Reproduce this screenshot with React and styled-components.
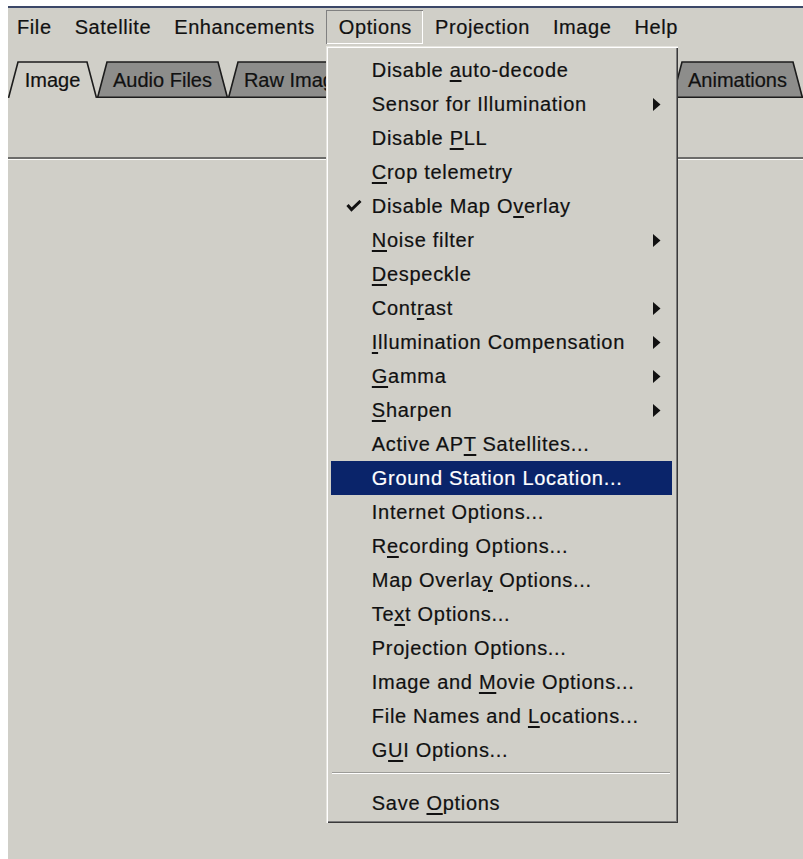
import React from "react";
import styled, { createGlobalStyle, css } from "styled-components";

const FACE = "#d0cfc8";
const INK = "#111";

const GlobalStyle = createGlobalStyle`
  html, body { background: #fff; }
  body {
    margin: 6px 0 0 8px;
    overflow: hidden;
    font-family: "Liberation Sans", Arial, sans-serif;
    color: ${INK};
    -webkit-text-stroke: 0.2px currentColor;
  }
`;

const Window = styled.div`
  min-height: calc(100vh - 6px);
  background: ${FACE};
  border-top: 2px solid #3c4868;
  display: flex;
  flex-direction: column;
`;

/* ---------- menu bar ---------- */

const MenuBar = styled.nav`
  height: 38px;
  display: flex;
  align-items: center;
  font-size: 20px;
  letter-spacing: 0.6px;
  position: relative;
  z-index: 5;
`;

const MenuSlot = styled.div`
  position: relative;
`;

const MenuTitle = styled.div`
  height: 34px;
  line-height: 34px;
  padding: 0 11px 0 12px;
  white-space: nowrap;
  ${(p) => p.$first && css`padding-left: 9px;`}
  ${(p) =>
    p.$open &&
    css`
      padding: 0 11px 0 13px;
      box-shadow: inset 1px 1px 0 #808080, inset -1px -1px 0 #fff;
    `}
`;

/* ---------- dropdown ---------- */

const Dropdown = styled.div`
  position: absolute;
  top: 36px;
  left: 0;
  width: 352px;
  box-sizing: border-box;
  padding: 7px 6px 3px 5px;
  background: ${FACE};
  box-shadow: inset 1px 1px 0 #e6e5df, inset 2px 2px 0 #fff,
    inset -1px -1px 0 #3a3a3a, inset -2px -2px 0 #7c7c7c;
  letter-spacing: 0.7px;
`;

const Item = styled.div`
  height: 34px;
  display: grid;
  grid-template-columns: 41px 1fr 24px;
  align-items: center;
  white-space: nowrap;
  ${(p) =>
    p.$hot &&
    css`
      background: #0a246a;
      color: #fff;
    `}
`;

const CheckCell = styled.span`
  justify-self: start;
  margin-left: 15px;
  display: flex;
`;

const ArrowCell = styled.span`
  justify-self: start;
  margin-left: 5px;
  display: flex;
`;

const Label = styled.span`
  line-height: 34px;
`;

const Key = styled.u`
  text-decoration-thickness: 1.5px;
  text-underline-offset: 3px;
`;

const Separator = styled.div`
  height: 0;
  margin: 5px 2px 12px 1px;
  border-top: 1px solid #9c9c98;
  border-bottom: 1px solid #fff;
`;

const Check = () => (
  <svg width="16" height="12" viewBox="0 0 16 12">
    <polyline points="1.5,5 5.5,9.5 14.5,1" fill="none" stroke={INK} strokeWidth="3" />
  </svg>
);

const Arrow = () => (
  <svg width="8" height="13" viewBox="0 0 8 13">
    <polygon points="0,0 7.5,6.5 0,13" fill={INK} />
  </svg>
);

/* ---------- tabs ---------- */

const TabStrip = styled.div`
  display: flex;
  padding-top: 15px;
  height: 37px;
  font-size: 20px;
`;

const Tab = styled.div`
  position: relative;
  flex: none;
  height: 37px;
  display: flex;
  align-items: center;
  justify-content: center;
  white-space: nowrap;
`;

const TabShape = styled.svg`
  position: absolute;
  inset: 0;
`;

const TabText = styled.span`
  position: relative;
  padding-top: 1px;
`;

const TabPage = styled.div`
  height: 59px;
  border-bottom: 2px solid #6c6c6a;
`;

const Body = styled.div`
  flex: 1;
  border-top: 1px solid #fbfbf8;
`;

const tabs = [
  { label: "Image", width: 89, active: true },
  { label: "Audio Files", width: 131 },
  { label: "Raw Images", width: 143 },
  { label: "Satellite Passes", width: 165 },
  { label: "Image Queue", width: 136 },
  { label: "Animations", width: 131 },
];

function TabItem({ label, width, active }) {
  const h = 37;
  const s = 10;
  return (
    <Tab style={{ width }}>
      <TabShape width={width} height={h} viewBox={`0 0 ${width} ${h}`}>
        <polygon
          points={`0,${h} ${s},1 ${width - s},1 ${width},${h}`}
          fill={active ? FACE : "#8d8d8b"}
        />
        <polyline
          points={`0.5,${h} ${s},1 ${width - s},1 ${width - 0.5},${h}`}
          fill="none"
          stroke="#1c1c1c"
          strokeWidth="1.6"
        />
        {!active && (
          <line x1="0" y1={h - 0.8} x2={width} y2={h - 0.8} stroke="#1c1c1c" strokeWidth="1.6" />
        )}
      </TabShape>
      <TabText>{label}</TabText>
    </Tab>
  );
}

/* ---------- data ---------- */

const optionItems = [
  { t: ["Disable ", ["a"], "uto-decode"] },
  { t: ["Sensor for Illumination"], sub: true },
  { t: ["Disable ", ["P"], "LL"] },
  { t: [["C"], "rop telemetry"] },
  { t: ["Disable Map O", ["v"], "erlay"], checked: true },
  { t: [["N"], "oise filter"], sub: true },
  { t: [["D"], "especkle"] },
  { t: ["Cont", ["r"], "ast"], sub: true },
  { t: [["I"], "llumination Compensation"], sub: true },
  { t: [["G"], "amma"], sub: true },
  { t: [["S"], "harpen"], sub: true },
  { t: ["Active AP", ["T"], " Satellites..."] },
  { t: ["Ground Station Location..."], hot: true },
  { t: ["Internet Options..."] },
  { t: ["R", ["e"], "cording Options..."] },
  { t: ["Map Overla", ["y"], " Options..."] },
  { t: ["Te", ["x"], "t Options..."] },
  { t: ["Projection Options..."] },
  { t: ["Image and ", ["M"], "ovie Options..."] },
  { t: ["File Names and ", ["L"], "ocations..."] },
  { t: ["G", ["U"], "I Options..."] },
  { sep: true },
  { t: ["Save ", ["O"], "ptions"] },
];

const renderText = (parts) =>
  parts.map((p, i) => (Array.isArray(p) ? <Key key={i}>{p[0]}</Key> : <React.Fragment key={i}>{p}</React.Fragment>));

const menus = ["File", "Satellite", "Enhancements", "Options", "Projection", "Image", "Help"];

export default function App() {
  return (
    <>
      <GlobalStyle />
      <Window>
        <MenuBar>
          {menus.map((m, i) => (
            <MenuSlot key={m}>
              <MenuTitle $first={i === 0} $open={m === "Options"}>
                {m}
              </MenuTitle>
              {m === "Options" && (
                <Dropdown>
                  {optionItems.map((it, k) =>
                    it.sep ? (
                      <Separator key={k} />
                    ) : (
                      <Item key={k} $hot={it.hot}>
                        <CheckCell>{it.checked && <Check />}</CheckCell>
                        <Label>{renderText(it.t)}</Label>
                        <ArrowCell>{it.sub && <Arrow />}</ArrowCell>
                      </Item>
                    )
                  )}
                </Dropdown>
              )}
            </MenuSlot>
          ))}
        </MenuBar>
        <TabStrip>
          {tabs.map((t) => (
            <TabItem key={t.label} {...t} />
          ))}
        </TabStrip>
        <TabPage />
        <Body />
      </Window>
    </>
  );
}
